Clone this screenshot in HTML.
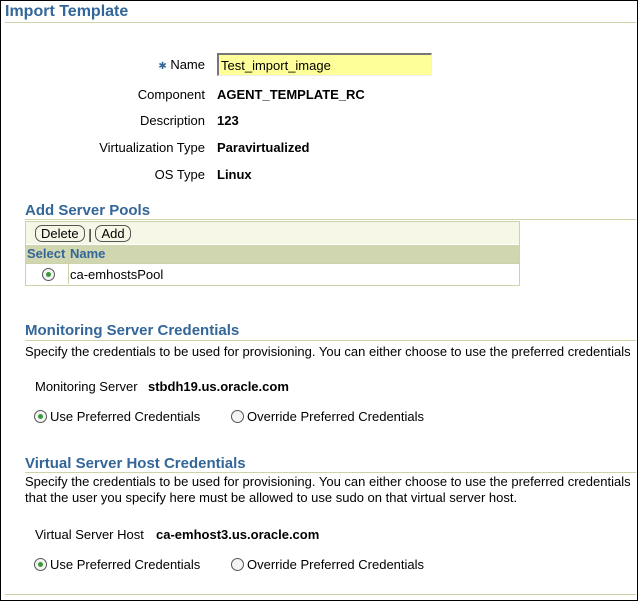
<!DOCTYPE html>
<html><head><style>
body{margin:0;width:638px;height:601px;overflow:hidden;background:#fff;font-family:"Liberation Sans",Arial,sans-serif;font-size:13px;color:#000;}
.frame{position:absolute;left:0;top:0;width:636px;height:599px;border:1px solid #000;border-right-width:2px;}
.a{position:absolute;white-space:nowrap;}
.h1{color:#336699;font-weight:bold;font-size:16px;}
.h2{color:#336699;font-weight:bold;font-size:15px;}
.line{position:absolute;height:1px;background:#ccd3a8;}
.lbl{position:absolute;right:433px;text-align:right;white-space:nowrap;}
.val{position:absolute;left:217px;font-weight:bold;}
.radio{display:inline-block;width:11px;height:11px;border:1px solid #555;border-radius:50%;vertical-align:-2px;background:#f4f4f4;position:relative;margin-right:3px;}
.radio.on::after{content:"";position:absolute;left:3px;top:3px;width:5px;height:5px;border-radius:50%;background:#3a9a3a;}
.btn{display:inline-block;border:1px solid #555;border-radius:7px;padding:0 5px;height:15px;line-height:15px;background:#f7f7e7;}
</style></head><body>
<div class="frame"></div>
<div class="a h1" style="left:5px;top:3px;">Import Template</div>
<div class="line" style="left:5px;right:2px;top:22px;"></div>

<div class="lbl" style="top:57px;"><span style="color:#336699;font-size:10px;">✱</span> Name</div>
<div class="a" style="left:217px;top:53px;background:#ffff99;border-top:2px solid #777;border-left:2px solid #777;border-right:1px solid #eee;border-bottom:1px solid #eee;box-sizing:border-box;width:215px;height:23px;padding:3px 2px;">Test_import_image</div>
<div class="lbl" style="top:87px;">Component</div><div class="a val" style="top:87px;">AGENT_TEMPLATE_RC</div>
<div class="lbl" style="top:113px;">Description</div><div class="a val" style="top:113px;">123</div>
<div class="lbl" style="top:140px;">Virtualization Type</div><div class="a val" style="top:140px;">Paravirtualized</div>
<div class="lbl" style="top:167px;">OS Type</div><div class="a val" style="top:167px;">Linux</div>

<div class="a h2" style="left:25px;top:202px;">Add Server Pools</div>
<div class="line" style="left:25px;right:2px;top:219px;"></div>
<div class="a" style="left:25px;top:221px;width:493px;height:63px;border:1px solid #ccd3a8;background:#fff;"></div>
<div class="a" style="left:26px;top:222px;width:493px;height:22px;background:#f7f7e7;"></div>
<div class="a" style="left:35px;top:225px;"><span class="btn">Delete</span> <span style="font-size:14px;vertical-align:-1px;">|</span> <span class="btn">Add</span></div>
<div class="a" style="left:26px;top:245px;width:493px;height:18px;background:#cfd6b0;"></div>
<div class="a" style="left:27px;top:246px;color:#336699;font-weight:bold;">Select</div>
<div class="a" style="left:68px;top:245px;width:1px;height:39px;background:#ccd3a8;"></div>
<div class="a" style="left:70px;top:246px;color:#336699;font-weight:bold;">Name</div>
<div class="a" style="left:26px;top:263px;width:493px;height:1px;background:#ccd3a8;"></div>
<div class="a" style="left:42px;top:267px;"><span class="radio on"></span></div>
<div class="a" style="left:70px;top:267px;">ca-emhostsPool</div>

<div class="a h2" style="left:25px;top:322px;">Monitoring Server Credentials</div>
<div class="line" style="left:25px;right:2px;top:340px;"></div>
<div class="a" style="left:25px;top:344px;">Specify the credentials to be used for provisioning. You can either choose to use the preferred credentials</div>
<div class="a" style="left:35px;top:379px;">Monitoring Server</div>
<div class="a" style="left:148px;top:379px;font-weight:bold;">stbdh19.us.oracle.com</div>
<div class="a" style="left:34px;top:409px;"><span class="radio on"></span>Use Preferred Credentials</div>
<div class="a" style="left:231px;top:409px;"><span class="radio"></span>Override Preferred Credentials</div>

<div class="a h2" style="left:25px;top:455px;">Virtual Server Host Credentials</div>
<div class="line" style="left:25px;right:2px;top:472px;"></div>
<div class="a" style="left:25px;top:474px;">Specify the credentials to be used for provisioning. You can either choose to use the preferred credentials</div>
<div class="a" style="left:25px;top:490px;">that the user you specify here must be allowed to use sudo on that virtual server host.</div>
<div class="a" style="left:35px;top:527px;">Virtual Server Host</div>
<div class="a" style="left:156px;top:527px;font-weight:bold;">ca-emhost3.us.oracle.com</div>
<div class="a" style="left:34px;top:557px;"><span class="radio on"></span>Use Preferred Credentials</div>
<div class="a" style="left:231px;top:557px;"><span class="radio"></span>Override Preferred Credentials</div>
<div class="line" style="left:5px;right:2px;top:594px;"></div>
</body></html>
